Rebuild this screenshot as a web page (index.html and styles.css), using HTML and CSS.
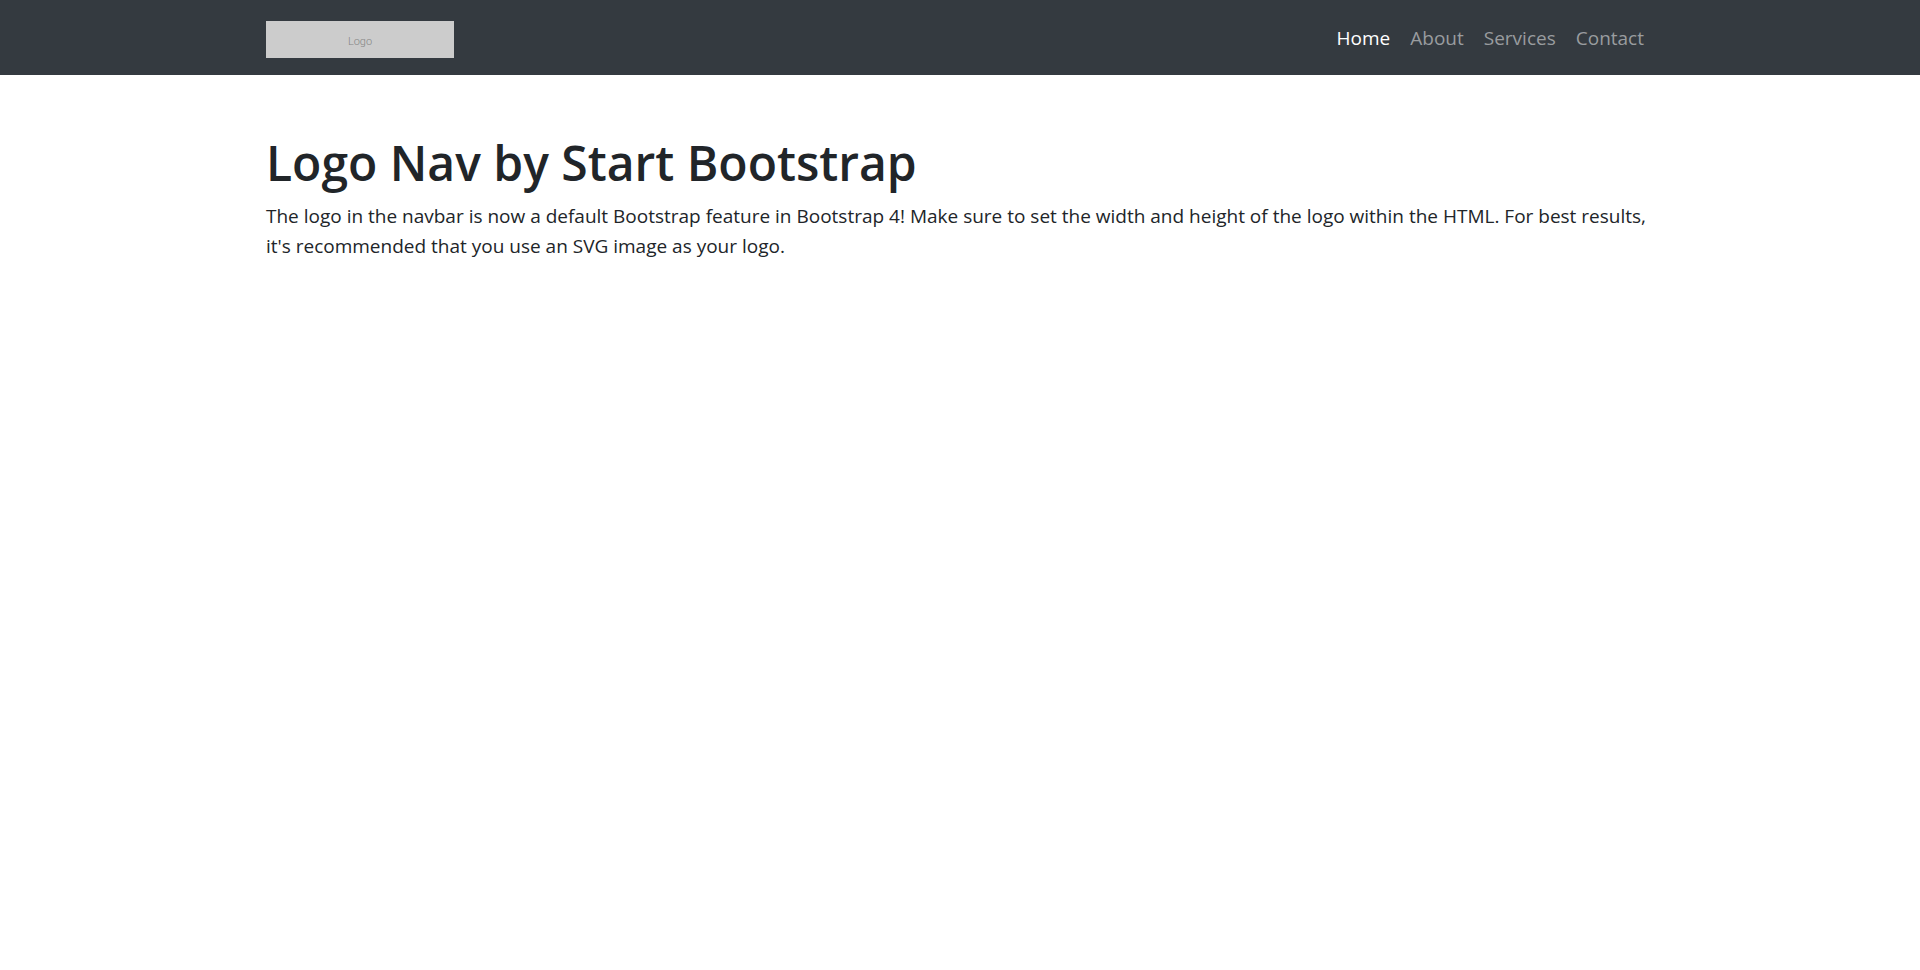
FILE: index.html
```html
<!DOCTYPE html>
<html lang="en">
<head>
<meta charset="utf-8">
<meta name="viewport" content="width=device-width, initial-scale=1">
<title>Logo Nav</title>
<link rel="stylesheet" href="styles.css">
</head>
<body>
<nav class="navbar">
  <div class="container navbar-inner">
    <a class="navbar-brand" href="#">Logo</a>
    <ul class="navbar-nav">
      <li><a class="nav-link active" href="#">Home</a></li>
      <li><a class="nav-link" href="#">About</a></li>
      <li><a class="nav-link" href="#">Services</a></li>
      <li><a class="nav-link" href="#">Contact</a></li>
    </ul>
  </div>
</nav>
<main class="container content">
  <h1 class="title">Logo Nav by Start Bootstrap</h1>
  <p class="lead">The logo in the navbar is now a default Bootstrap feature in Bootstrap 4! Make sure to set the width and height of the logo within the HTML. For best results, it's recommended that you use an SVG image as your logo.</p>
</main>
</body>
</html>
```
FILE: styles.css
```css
* { box-sizing: border-box; }
body {
  margin: 0;
  background: #fff;
  color: #212529;
  font: 400 19px/30px "Segoe UI", "Open Sans", "Noto Sans", sans-serif;
}
.container {
  width: 100%;
  max-width: 1426px;
  margin: 0 auto;
  padding: 0 19px;
}
.navbar {
  background: #343a40;
  padding: 10px 0;
}
.navbar-inner {
  display: flex;
  flex-wrap: wrap;
  align-items: center;
  justify-content: space-between;
  min-height: 55px;
}
.navbar-brand {
  display: flex;
  align-items: center;
  justify-content: center;
  width: 188px;
  height: 37px;
  margin-top: 4px;
  padding-top: 4px;
  background: #ccc;
  color: #858585;
  font: 300 11px/16px Roboto, sans-serif;
  text-decoration: none;
}
.navbar-nav {
  display: flex;
  margin: 0;
  padding: 0;
  list-style: none;
}
.nav-link {
  display: block;
  padding: 10px;
  color: #999c9f;
  text-decoration: none;
}
.nav-link.active { color: #fff; }
.content { padding-top: 58px; }
.title {
  margin: 0 0 8px;
  font-size: 48px;
  font-weight: 600;
  line-height: 60px;
}
.lead { margin: 0 0 20px; }
```
